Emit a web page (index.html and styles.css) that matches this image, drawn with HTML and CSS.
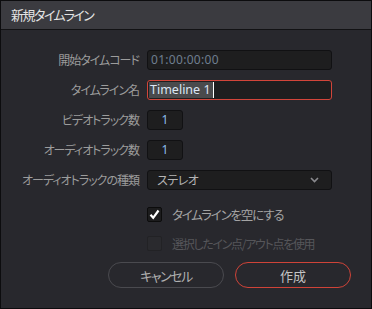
FILE: index.html
```html
<!DOCTYPE html>
<html lang="ja">
<head>
    <meta charset="UTF-8">
    <title>新規タイムライン</title>
    <link rel="stylesheet" href="styles.css">
</head>
<body>
    <div class="dialog">
        <div class="title">新規タイムライン</div>

        <div class="form">
            <label>開始タイムコード</label>
            <div class="field tc">01:00:00:00</div>

            <label>タイムライン名</label>
            <div class="field active"><span class="sel">Timeline 1</span><span class="caret"></span></div>

            <label>ビデオトラック数</label>
            <div class="field num">1</div>

            <label>オーディオトラック数</label>
            <div class="field num">1</div>

            <label>オーディオトラックの種類</label>
            <div class="field select">
                <span>ステレオ</span>
                <svg class="chevron" width="9" height="6" viewBox="0 0 9 6"><path d="M1 1 L4.5 4.5 L8 1" fill="none" stroke="#8a8a8e" stroke-width="1.6"/></svg>
            </div>
        </div>

        <!-- options -->
        <div class="checks">
            <div class="check-row">
                <span class="box checked">
                    <svg width="13" height="13" viewBox="0 0 13 13"><path d="M2.5 6.8 L5.2 9.8 L10.5 2.5" fill="none" stroke="#fff" stroke-width="2.2"/></svg>
                </span>
                <span class="check-label">タイムラインを空にする</span>
            </div>
            <div class="check-row disabled">
                <span class="box"></span>
                <span class="check-label">選択したイン点/アウト点を使用</span>
            </div>
        </div>

        <div class="buttons">
            <button class="btn">キャンセル</button>
            <button class="btn primary">作成</button>
        </div>
    </div>
</body>
</html>
```

FILE: styles.css
```css
body {
    margin: 0;
    padding: 0;
    background-color: #28282d;
    font-family: "Noto Sans CJK JP", "Noto Sans", sans-serif;
    font-feature-settings: "palt";
}

.dialog {
    width: 372px;
    height: 309px;
    box-sizing: border-box;
    border: 1px solid #0c0c0e;
    background-color: #28282d;
}

.title {
    height: 28px;
    line-height: 28px;
    padding-left: 10px;
    background-color: #3b3b40;
    border-bottom: 1px solid #121214;
    color: #e4e4e4;
    font-size: 13px;
    letter-spacing: -1.5px;
}

.form {
    display: grid;
    grid-template-columns: 139px 185px;
    column-gap: 7px;
    row-gap: 10px;
    padding-top: 20px;
}

.form label {
    text-align: right;
    color: #9c9c9c;
    font-size: 12px;
    line-height: 20px;
    letter-spacing: -1px;
    padding-right: 1px;
}

.field {
    height: 20px;
    box-sizing: border-box;
    border: 1px solid #111113;
    border-radius: 3px;
    background-color: #1e1e1f;
    font-size: 12px;
    line-height: 18px;
    display: flex;
    align-items: center;
}

.tc {
    padding-left: 3px;
    color: #6f7f90;
    font-family: "Noto Sans", sans-serif;
    letter-spacing: 0.3px;
}

.active {
    border-color: #d2453a;
    padding: 1px;
}

.sel {
    background-color: #4a4a4c;
    color: #dde7f5;
    font-family: "Noto Sans", sans-serif;
    font-size: 12.5px;
    height: 16px;
    line-height: 16px;
    padding: 0 2px 0 1px;
}

.caret {
    width: 1px;
    height: 16px;
    background-color: #ffffff;
}

.num {
    width: 36px;
    justify-content: center;
    color: #8cbcec;
    font-family: "Noto Sans", sans-serif;
    font-size: 12px;
}

.select {
    justify-content: space-between;
    padding: 0 12px 0 9px;
    color: #b4b4b4;
    letter-spacing: -0.5px;
}

.checks {
    margin: 17px 0 0 146px;
    display: flex;
    flex-direction: column;
    gap: 14px;
}

.check-row {
    display: flex;
    align-items: center;
    gap: 10px;
    height: 15px;
}

.box {
    width: 15px;
    height: 15px;
    box-sizing: border-box;
    border: 1px solid #131315;
    border-radius: 2px;
    background-color: #2c2c30;
    display: flex;
    align-items: center;
    justify-content: center;
}

.box.checked {
    background-color: #1c1c1d;
    border-color: #0c0c0c;
}

.check-label {
    color: #a4a4a4;
    font-size: 12.5px;
    letter-spacing: -1.2px;
}

.disabled .box {
    border-color: #222225;
    background-color: #2a2a2e;
}

.disabled .check-label {
    color: #56565a;
    font-size: 12px;
    letter-spacing: -1.3px;
}

.buttons {
    display: flex;
    justify-content: flex-end;
    gap: 11px;
    margin-top: 11px;
    padding-right: 20px;
}

.btn {
    width: 116px;
    height: 26px;
    border: 1px solid #4a4a4f;
    border-radius: 13px;
    background-color: transparent;
    color: #b0b0b0;
    font-family: "Noto Sans CJK JP", sans-serif;
    font-feature-settings: "palt";
    font-size: 13px;
    letter-spacing: -1.5px;
    padding: 0;
}

.btn.primary {
    border-color: #cf4338;
    color: #c4c4c4;
    letter-spacing: 0;
}
```
